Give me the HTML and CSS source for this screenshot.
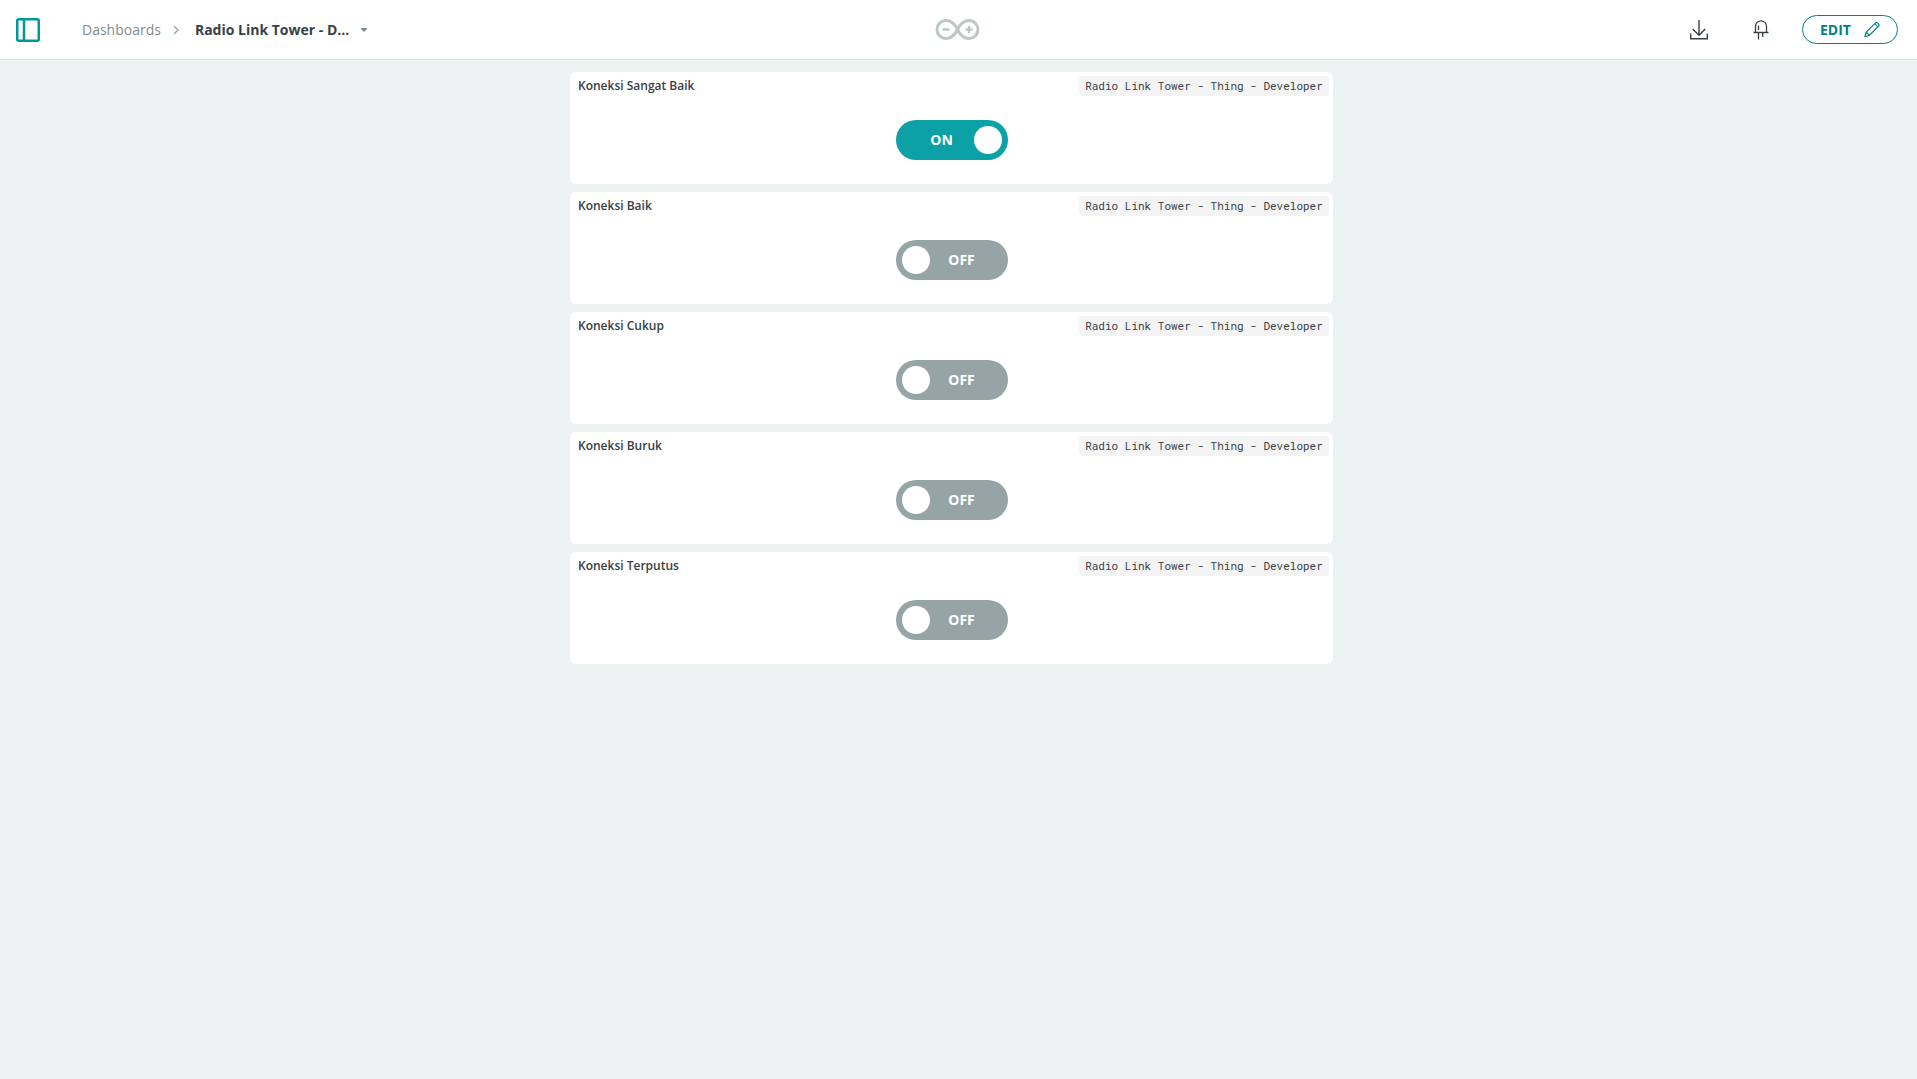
FILE: index.html
```html
<!DOCTYPE html>
<html lang="en">
<head>
<meta charset="utf-8">
<meta name="viewport" content="width=device-width, initial-scale=1">
<title>Radio Link Tower - Dashboard</title>
<link rel="stylesheet" href="styles.css">
</head>
<body>
<header class="topbar">
  <div class="topbar-left">
    <button class="icon-button" type="button" aria-label="Toggle sidebar">
      <svg width="24" height="24" viewBox="0 0 24 24" fill="none" stroke="#00979d" stroke-width="2.500">
        <rect x="1.250" y="1.250" width="21.500" height="21.500" rx="1.500"/><path d="M8 1v22"/>
      </svg>
    </button>
    <nav class="breadcrumb" aria-label="Breadcrumb">
      <a class="crumb" href="#">Dashboards</a>
      <svg class="chevron" width="6" height="10" viewBox="0 0 6 10" fill="none" stroke="#95a5a6" stroke-width="1.3"><path d="M1 1l4 4-4 4"/></svg>
      <button class="title-menu" type="button">Radio Link Tower - D...
        <svg width="6" height="4" viewBox="0 0 6 4" fill="#7f8c8d"><path d="M0 0h6v1L3 4 0 1z"/></svg>
      </button>
    </nav>
  </div>
  <a class="logo" href="#" aria-label="Home">
    <svg width="45" height="21" viewBox="0 0 45 21" fill="none" stroke="#bdc7c7">
      <path stroke-width="3" d="M22.5 10.5C20 5.500 16 1.500 11 1.500a9 9 0 1 0 0 18c5 0 9-4 11.500-9s6.500-9 11.500-9a9 9 0 1 1 0 18c-5 0-9-4-11.500-9z"/>
      <path stroke-width="2.300" d="M7.500 10.500h7M30.500 10.500h7M34 7v7"/>
    </svg>
  </a>
  <div class="topbar-right">
    <button class="icon-button" type="button" aria-label="Download">
      <svg width="18" height="20" viewBox="0 0 18 20" fill="none" stroke="#374146" stroke-width="1.400">
        <path d="M9 0v15.300M2.700 9L9 15.300 15.300 9M.7 13.500v5.300h16.600v-5.300"/>
      </svg>
    </button>
    <button class="icon-button" type="button" aria-label="Device status">
      <svg width="16" height="20" viewBox="0 0 16 20" fill="none" stroke="#374146" stroke-width="1.300">
        <path d="M2.500 12.500V6.300a5.500 5.500 0 0 1 11 0v6.200M.5 12.500h15M5.500 12.500V19.500M9.700 12.500v4.500M5.500 5.500v4.500"/>
      </svg>
    </button>
    <button class="edit" type="button">EDIT
      <svg width="16" height="16" viewBox="0 0 16 16" fill="none" stroke="#008184" stroke-width="1.200" stroke-linejoin="round">
        <path d="M.8 14.700l1.400-4.600L11.500.9a1.300 1.300 0 0 1 1.900 0l1.300 1.300a1.300 1.300 0 0 1 0 1.900L5.400 13.300zM10.800 1.700l3.100 3.100M2.200 10.100l3.200 3.200"/>
      </svg>
    </button>
  </div>
</header>
<main class="board">
  <section class="card">
    <div class="card-head"><h2 class="card-title" id="w1">Koneksi Sangat Baik</h2><span class="tag">Radio Link Tower - Thing - Developer</span></div>
    <label class="toggle"><input type="checkbox" role="switch" aria-labelledby="w1" checked><span class="state on">ON</span><span class="state off">OFF</span></label>
  </section>
  <section class="card">
    <div class="card-head"><h2 class="card-title" id="w2">Koneksi Baik</h2><span class="tag">Radio Link Tower - Thing - Developer</span></div>
    <label class="toggle"><input type="checkbox" role="switch" aria-labelledby="w2"><span class="state on">ON</span><span class="state off">OFF</span></label>
  </section>
  <section class="card">
    <div class="card-head"><h2 class="card-title" id="w3">Koneksi Cukup</h2><span class="tag">Radio Link Tower - Thing - Developer</span></div>
    <label class="toggle"><input type="checkbox" role="switch" aria-labelledby="w3"><span class="state on">ON</span><span class="state off">OFF</span></label>
  </section>
  <section class="card">
    <div class="card-head"><h2 class="card-title" id="w4">Koneksi Buruk</h2><span class="tag">Radio Link Tower - Thing - Developer</span></div>
    <label class="toggle"><input type="checkbox" role="switch" aria-labelledby="w4"><span class="state on">ON</span><span class="state off">OFF</span></label>
  </section>
  <section class="card">
    <div class="card-head"><h2 class="card-title" id="w5">Koneksi Terputus</h2><span class="tag">Radio Link Tower - Thing - Developer</span></div>
    <label class="toggle"><input type="checkbox" role="switch" aria-labelledby="w5"><span class="state on">ON</span><span class="state off">OFF</span></label>
  </section>
</main>
</body>
</html>
```
FILE: styles.css
```css
* {
  box-sizing: border-box;
}

body {
  margin: 0;
  min-height: 100vh;
  background: #ecf1f1;
  color: #374146;
  font-family: "Open Sans", "Noto Sans", sans-serif;
  font-size: 14px;
}

button {
  margin: 0;
  padding: 0;
  border: 0;
  background: none;
  color: inherit;
  font: inherit;
  cursor: pointer;
}

svg {
  display: block;
}

.topbar {
  display: grid;
  grid-template-columns: 1fr auto 1fr;
  align-items: center;
  height: 60px;
  padding: 0 19px 0 16px;
  background: #fff;
  border-bottom: 1px solid #dae3e3;
}

.topbar-left {
  display: flex;
  align-items: center;
  gap: 42px;
}

.breadcrumb {
  display: flex;
  align-items: center;
  gap: 12px;
}

.crumb {
  color: #7f8c8d;
  text-decoration: none;
}

.chevron {
  margin-right: 4px;
}

.title-menu {
  display: flex;
  align-items: center;
  gap: 12px;
  font-weight: 700;
}

.topbar-right {
  display: flex;
  align-items: center;
  justify-content: flex-end;
}

.topbar-right .icon-button {
  margin-right: 45px;
}

.topbar-right .icon-button + .icon-button {
  margin-right: 33px;
}

.edit {
  display: flex;
  align-items: center;
  justify-content: space-between;
  width: 96px;
  height: 29px;
  padding: 0 17px;
  border: 1px solid #008184;
  border-radius: 15px;
  color: #008184;
  font-weight: 700;
}

.board {
  display: flex;
  flex-direction: column;
  gap: 8px;
  width: 100%;
  max-width: 777px;
  margin: 0 auto;
  padding: 12px 14px 12px 0;
}

.card {
  display: flex;
  flex-direction: column;
  align-items: center;
  gap: 24px;
  padding: 4px 4px 24px;
  background: #fff;
  border-radius: 6px;
}

.card-head {
  display: flex;
  align-items: center;
  justify-content: space-between;
  width: 100%;
  padding-left: 4px;
}

.card-title {
  margin: 0;
  font-size: 12px;
  font-weight: 600;
  line-height: 20px;
}

.tag {
  min-width: 250px;
  border-radius: 4px;
  background: #f4f4f4;
  font-family: "Roboto Mono", "Liberation Mono", monospace;
  font-size: 11px;
  line-height: 20px;
  text-align: center;
}

.toggle {
  display: flex;
  align-items: center;
  justify-content: space-between;
  width: 112px;
  height: 40px;
  padding: 0 6px;
  border-radius: 20px;
  background: #95a5a6;
  color: #fff;
  font-weight: 700;
  line-height: 18px;
  cursor: pointer;
}

.toggle input {
  appearance: none;
  width: 28px;
  height: 28px;
  margin: 0;
  border-radius: 50%;
  background: #fff;
}

.toggle:has(input:checked) {
  flex-direction: row-reverse;
  background: #0ca1a6;
}

.state {
  width: 64px;
  text-align: center;
}

.off {
  margin-right: 8px;
}

.on {
  display: none;
  margin-left: 8px;
}

.toggle input:checked ~ .on {
  display: block;
}

.toggle input:checked ~ .off {
  display: none;
}
```
